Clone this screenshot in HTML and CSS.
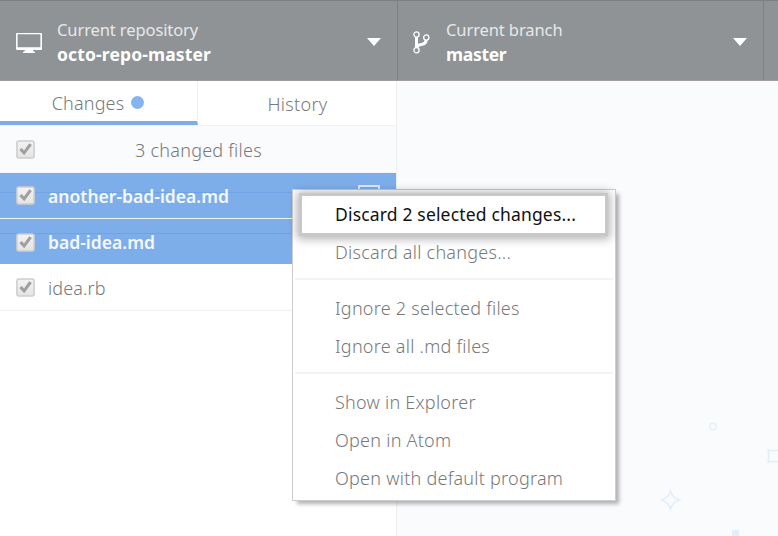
FILE: index.html
```html
<!DOCTYPE html>
<html lang="en">
<head>
<meta charset="utf-8">
<title>Repository</title>
<link rel="stylesheet" href="styles.css">
</head>
<body>
<svg class="defs" width="0" height="0"><defs>
  <linearGradient id="box" x1="0" y1="0" x2="0" y2="1"><stop offset="0" stop-color="#f3f3f3"/><stop offset="1" stop-color="#e4e4e4"/></linearGradient>
  <symbol id="check" viewBox="0 0 19 19">
    <rect x=".9" y=".9" width="17.2" height="17.2" rx="2" fill="url(#box)" stroke="#cdcdcd" stroke-width="1.5"/>
    <path d="M3.300 10 5.800 8l2.200 2.500L13.200 3.300 15.900 5.100 8.200 15.300z" fill="#a0a0a0"/>
  </symbol>
</defs></svg>
<header class="toolbar">
  <div class="tool repo">
    <svg class="monitor" width="26" height="22" viewBox="0 0 26 22"><path fill="#fff" fill-rule="evenodd" d="M1 2h24q1 0 1 1v15q0 1-1 1h-8q0 1.700 2 2v1H7v-1q2-.3 2-2H1q-1 0-1-1V3q0-1 1-1zm.6 1.300v13h22.800v-13z"/></svg>
    <div class="label"><span>Current repository</span><strong>octo-repo-master</strong></div>
    <svg class="caret" width="14" height="8"><path d="M0 0h14L7 8z" fill="#fff"/></svg>
  </div>
  <div class="tool branch">
    <svg class="fork" width="17" height="23" viewBox="0 0 17 23"><g fill="none" stroke="#fff"><path stroke-width="3" d="M3.500 5.500v12M13.300 8q0 5-4.800 5.500-4.500.4-5 4.500"/><circle cx="3.500" cy="3.500" r="2.600" fill="#8f9395" stroke-width="1.300"/><circle cx="13.300" cy="6.500" r="2.600" fill="#8f9395" stroke-width="1.300"/><circle cx="3.500" cy="19.300" r="2.600" fill="#8f9395" stroke-width="1.300"/></g></svg>
    <div class="label"><span>Current branch</span><strong class="branch-name">master</strong></div>
    <svg class="caret" width="14" height="8"><path d="M0 0h14L7 8z" fill="#fff"/></svg>
  </div>
</header>
<div class="main">
  <aside class="sidebar">
    <nav class="tabs">
      <div class="tab active"><span>Changes</span><i class="dot"></i></div>
      <div class="tab history"><span>History</span></div>
    </nav>
    <div class="row summary"><svg class="cb"><use href="#check"/></svg><span class="count">3 changed files</span></div>
    <div class="row selected first"><svg class="cb"><use href="#check"/></svg><span>another-bad-idea.md</span><i class="status"></i></div>
    <div class="row selected second"><svg class="cb"><use href="#check"/></svg><span>bad-idea.md</span></div>
    <div class="row plain"><svg class="cb"><use href="#check"/></svg><span>idea.rb</span></div>
  </aside>
  <section class="content">
    <svg class="confetti" width="120" height="120" viewBox="658 416 120 120"><g fill="none" stroke="#e3eefa" stroke-width="1.500"><circle cx="713" cy="426.500" r="3.300"/><path d="M768 450q5 1.500 11 0v12q-6-1.500-11 0 1.500-6 0-12zM670.500 491q1.800 6.700 9 9-7.200 2.300-9 9-1.800-6.700-9-9 7.200-2.300 9-9z"/></g><path d="M732 530h7v6h-7z" fill="#e3eefa"/></svg>
  </section>
</div>
<div class="menu">
  <div class="item focus"><span>Discard 2 selected changes...</span></div>
  <div class="item"><span>Discard all changes...</span></div>
  <hr>
  <div class="item"><span>Ignore 2 selected files</span></div>
  <div class="item"><span>Ignore all .md files</span></div>
  <hr>
  <div class="item"><span>Show in Explorer</span></div>
  <div class="item"><span>Open in Atom</span></div>
  <div class="item"><span>Open with default program</span></div>
</div>
</body>
</html>
```
FILE: styles.css
```css
* { box-sizing: border-box; }
body { margin: 0; width: 778px; height: 536px; overflow: hidden; display: flex; flex-direction: column; background: #fafbfd; color: #77797b; font: 300 18px/24px "Noto Sans", "Open Sans", sans-serif; letter-spacing: .25px; white-space: nowrap; }
.defs { position: absolute; }
.toolbar { display: flex; flex: none; height: 81px; background: #8f9395; border-top: 1px solid #7f7f81; border-bottom: 1px solid #a09b9d; color: #fff; }
.tool { display: flex; align-items: center; border-right: 1px solid #7f8082; }
.repo { width: 398px; padding: 3px 16px 0 16px; }
.branch { width: 366px; padding: 3px 16px 0 16px; }
.label { display: flex; flex-direction: column; flex: 1; padding-bottom: 1px; }
.label span { color: #e7e8e9; font-size: 16.5px; font-weight: 400; letter-spacing: -.1px; line-height: 25px; }
.label strong { font-size: 17.5px; font-weight: 700; letter-spacing: .14px; line-height: 25px; }
.label .branch-name { letter-spacing: -.3px; }
.monitor { margin-right: 15px; }
.fork { margin: 0 16px 0 -1px; }
.caret { margin-top: -1px; }
.main { display: flex; flex: 1; }
.sidebar { width: 397px; background: #fff; border-right: 1px solid #eceef0; }
.tabs { display: flex; height: 45px; border-bottom: 1px solid #f0f1f3; }
.tab { flex: 1; display: flex; align-items: center; justify-content: center; padding-top: 3px; letter-spacing: .15px; }
.history { padding-top: 1px; padding-left: 1px; letter-spacing: .3px; }
.active { flex: 0 0 198px; padding-right: 1px; border-right: 1px solid #eef0f2; border-bottom: 4px solid #7eaeea; gap: 7px; }
.dot { width: 13px; height: 13px; border-radius: 50%; background: #85b5f0; }
.row { display: flex; align-items: center; height: 46px; padding-left: 16px; }
.cb { width: 19px; height: 19px; flex: none; margin-right: 13px; }
.summary { height: 47px; background: #fafbfd; border-bottom: 1px solid #f3f5f8; }
.count { margin-left: 87px; padding-top: 2px; }
.selected { background: linear-gradient(#6fa3e4, #6fa3e4) 0 19px / 100% 1px no-repeat #7eaeea; color: #f4f8fe; font-size: 17.5px; font-weight: 600; letter-spacing: .02px; }
.first { border-bottom: 1px solid #f1f6fc; }
.second { background-position: 0 14px; height: 45px; padding-top: 1px; }
.plain { height: 47px; border-bottom: 1px solid #f0f1f3; padding-top: 1px; letter-spacing: .1px; }
.status { width: 22px; height: 21px; border: 2px solid #dbe8f9; margin-left: auto; margin-right: 16px; }
.content { flex: 1; display: flex; align-items: flex-end; justify-content: flex-end; }
.menu { position: absolute; left: 292px; top: 189px; width: 324px; height: 312px; padding-top: 5px; background: #fff; border: 1px solid #cdcdcd; box-shadow: 4px 4px 4px -1px rgba(0,0,0,.3); }
.item { display: flex; align-items: center; height: 38px; padding-left: 42px; }
.focus { height: 43px; margin: -2px 7px -3px 6px; padding: 0 0 2px 33px; border: 3px solid #c8c8c8; background: #fff; color: #111; box-shadow: 0 1px 9px 2px rgba(0,0,0,.3); font-size: 17.5px; font-weight: 400; letter-spacing: .17px; }
hr { height: 2px; margin: 7px 2px 9px; border: 0; background: #f3f3f3; }
```
